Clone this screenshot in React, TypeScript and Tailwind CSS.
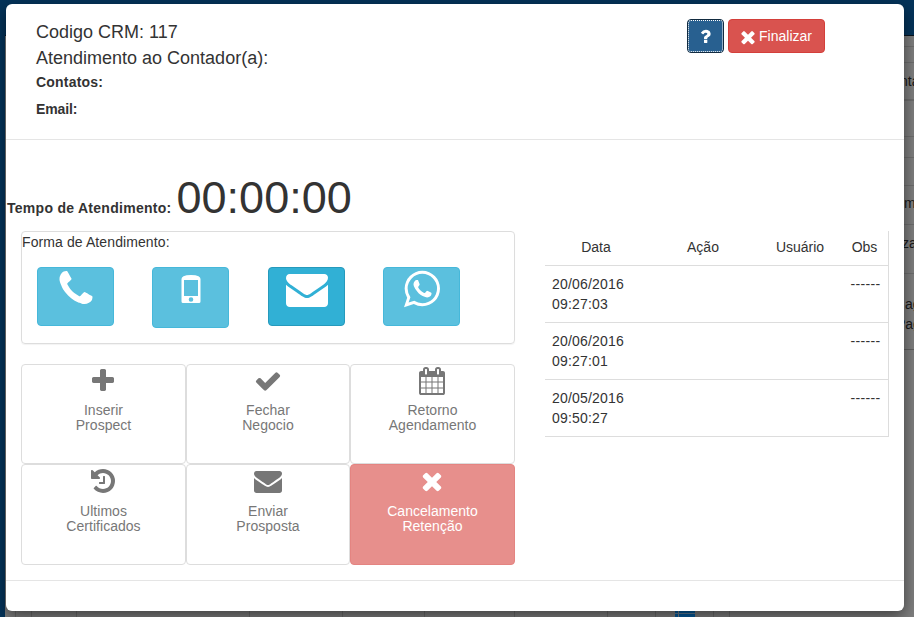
import React from "react";

const paths = {
  plus: "M1600 736v192q0 40-28 68t-68 28h-416v416q0 40-28 68t-68 28h-192q-40 0-68-28t-28-68v-416h-416q-40 0-68-28t-28-68v-192q0-40 28-68t68-28h416v-416q0-40 28-68t68-28h192q40 0 68 28t28 68v416h416q40 0 68 28t28 68z",
  check:
    "M1671 566q0 40-28 68l-724 724-136 136q-28 28-68 28t-68-28l-136-136-362-362q-28-28-28-68t28-68l136-136q28-28 68-28t68 28l294 295 656-657q28-28 68-28t68 28l136 136q28 28 28 68z",
  times:
    "M1490 1322q0 40-28 68l-136 136q-28 28-68 28t-68-28l-294-294-294 294q-28 28-68 28t-68-28l-136-136q-28-28-28-68t28-68l294-294-294-294q-28-28-28-68t28-68l136-136q28-28 68-28t68 28l294 294 294-294q28-28 68-28t68 28l136 136q28 28 28 68t-28 68l-294 294 294 294q28 28 28 68z",
  envelope:
    "M1792 710v794q0 66-47 113t-113 47h-1472q-66 0-113-47t-47-113v-794q44 49 101 87 362 246 497 345 57 42 92.500 65.500t94.500 48 110 24.500h2q51 0 110-24.500t94.500-48 92.500-65.500q170-123 498-345 57-39 100-87zm0-294q0 79-49 151t-122 123q-376 261-468 325-10 7-42.500 31t-54 38.500-52 32.500-57.500 27-50 9h-2q-23 0-50-9t-57.500-27-52-32.500-54-38.500-42.500-31q-91-64-262-182.500t-205-142.500q-62-42-117-115.500t-55-136.500q0-78 41.500-130t118.500-52h1472q65 0 112.500 47t47.500 113z",
  phone:
    "M1600 1240q0 27-10 70.500t-21 68.500q-21 50-122 106-94 51-186 51-27 0-53-3.500t-57.500-12.500-47-14.500-55.500-20.500-49-18q-98-35-175-83-127-79-264-216t-216-264q-48-77-83-175-3-9-18-49t-20.500-55.500-14.500-47-12.500-57.500-3.500-53q0-92 51-186 56-101 106-122 25-11 68.500-21t70.500-10q14 0 21 3 18 6 53 76 11 19 30 54t35 63.500 31 53.500q3 4 17.500 25t21.500 35.500 7 28.500q0 20-28.500 50t-62 55-62 53-28.500 46q0 9 5 22.500t8.500 20.500 14 24 11.500 19q76 137 174 235t235 174q2 1 19 11.500t24 14 20.500 8.500 22.500 5q18 0 46-28.500t53-62 55-62 50-28.500q14 0 28.500 7t35.500 21.500 25 17.500q25 15 53.500 31t63.500 35 54 30q70 35 76 53 3 7 3 21z",
  history:
    "M1664 896q0 156-61 298t-164 245-245 164-298 61q-172 0-327-72.500t-264-204.500q-7-10-6.500-22.500t8.500-20.500l137-138q10-9 25-9 16 2 23 12 73 95 179 147t225 52q104 0 198.500-40.500t163.500-109.500 109.500-163.500 40.500-198.500-40.500-198.500-109.500-163.500-163.500-109.500-198.500-40.500q-98 0-188 35.500t-160 101.500l137 138q31 30 14 69-17 40-59 40h-448q-26 0-45-19t-19-45v-448q0-42 40-59 39-17 69 14l130 129q107-101 244.500-156.500t284.500-55.500q156 0 298 61t245 164 164 245 61 298zm-640-288v448q0 14-9 23t-23 9h-320q-14 0-23-9t-9-23v-64q0-14 9-23t23-9h224v-352q0-14 9-23t23-9h64q14 0 23 9t9 23z",
  calendar:
    "M192 1664h288v-288h-288v288zm352 0h320v-288h-320v288zm-352-352h288v-320h-288v320zm352 0h320v-320h-320v320zm-352-384h288v-288h-288v288zm736 736h320v-288h-320v288zm-384-736h320v-288h-320v288zm768 736h288v-288h-288v288zm-384-352h320v-320h-320v320zm-352-864v-288q0-13-9.500-22.500t-22.500-9.500h-64q-13 0-22.500 9.500t-9.500 22.500v288q0 13 9.500 22.500t22.500 9.500h64q13 0 22.500-9.500t9.500-22.500zm736 864h288v-320h-288v320zm-384-384h320v-288h-320v288zm384 0h288v-288h-288v288zm32-480v-288q0-13-9.500-22.500t-22.500-9.500h-64q-13 0-22.500 9.500t-9.500 22.500v288q0 13 9.500 22.500t22.500 9.500h64q13 0 22.500-9.500t9.500-22.500zm384-64v1280q0 52-38 90t-90 38h-1408q-52 0-90-38t-38-90v-1280q0-52 38-90t90-38h128v-96q0-66 47-113t113-47h64q66 0 113 47t47 113v96h384v-96q0-66 47-113t113-47h64q66 0 113 47t47 113v96h128q52 0 90 38t38 90z",
  whatsapp:
    "M1113 974q13 0 97.500 44t89.500 53q2 5 2 15 0 33-17 76-16 39-71 65.500t-102 26.500q-57 0-190-62-98-45-170-118t-148-185q-72-107-71-194v-8q3-91 74-158 24-22 52-22 6 0 18 1.500t19 1.500q19 0 26.500 6.500t15.500 27.500q8 20 33 88t25 75q0 21-34.500 57.500t-34.500 46.500q0 7 5 15 34 73 102 137 56 53 151 101 12 7 22 7 15 0 54-48.500t52-48.500zm-203 530q127 0 243.500-50t200.500-134 134-200.500 50-243.500-50-243.500-134-200.500-200.500-134-243.500-50-243.500 50-200.500 134-134 200.500-50 243.500q0 203 120 368l-79 233 242-77q158 104 345 104zm0-1382q153 0 292.500 60t240.500 161 161 240.500 60 292.500-60 292.500-161 240.500-240.500 161-292.500 60q-195 0-365-94l-417 134 136-405q-108-178-108-389 0-153 60-292.500t161-240.500 240.500-161 292.500-60z",
  question:
    "M1088 1256v240q0 16-12 28t-28 12h-240q-16 0-28-12t-12-28v-240q0-16 12-28t28-12h240q16 0 28 12t12 28zm316-600q0 54-15.500 101t-35 76.500-55 59.500-57.500 43.500-61 35.500q-41 23-68.500 65t-27.500 67q0 17-12 32.500t-28 15.500h-240q-15 0-25.500-18.500t-10.500-37.500v-45q0-83 65-156.500t143-108.500q59-27 84-56t25-76q0-42-46.500-74t-107.500-32q-65 0-108 29-35 25-107 115-13 16-31 16-12 0-25-8l-164-125q-13-10-15.500-25t5.500-28q160-266 464-266 80 0 161 31t146 83 106 127.500 41 158.500z",
};

type IconName = keyof typeof paths;

function Icon({ name, className }: { name: IconName; className: string }) {
  return (
    <svg viewBox="0 0 1792 1792" fill="currentColor" className={`shrink-0 overflow-visible ${className}`}>
      <path d={paths[name]} />
    </svg>
  );
}

function MobileIcon() {
  return (
    <svg viewBox="0 0 20 28" className="mt-[7px] ml-px h-7 w-5 shrink-0" fill="currentColor">
      <path
        fillRule="evenodd"
        d="M0.500 4Q0.500 2.200 2.500 1.200Q5 0 10 0Q15 0 17.500 1.200Q19.500 2.200 19.500 4V26.500Q19.500 28 18 28H2Q0.500 28 0.500 26.500ZM3 5V21H17V5ZM10 22.200A2.300 2.300 0 1 0 10 26.800A2.300 2.300 0 1 0 10 22.200Z"
      />
    </svg>
  );
}

function ContactButton({ active, tall, children }: { active?: boolean; tall?: boolean; children: React.ReactNode }) {
  const color = active ? "border-[#269abc] bg-[#31b0d5]" : "border-[#46b8da] bg-[#5bc0de]";
  return (
    <button
      className={`flex w-[77px] items-start justify-center rounded-[4px] border text-white ${tall ? "h-[61px]" : "h-[59px]"} ${color}`}
    >
      {children}
    </button>
  );
}

interface ActionProps {
  icon: IconName;
  lines: [string, string];
  danger?: boolean;
  wide?: boolean;
  low?: boolean;
}

function Action({ icon, lines, danger, wide, low }: ActionProps) {
  return (
    <button
      className={`flex flex-col items-center rounded-[4px] border pt-0.5 leading-[15px] ${
        danger ? "border-[#e48481] bg-[#e78f8c] text-white" : "border-[#ddd] bg-white text-[#777]"
      }`}
    >
      <Icon name={icon} className={wide ? "mr-px size-7" : "size-7"} />
      <span className={`block tracking-[0.03px] ${low ? "mt-[9px]" : "mt-2"}`}>
        {lines[0]}
        <br />
        {lines[1]}
      </span>
    </button>
  );
}

const rows = [
  ["20/06/2016", "09:27:03"],
  ["20/06/2016", "09:27:01"],
  ["20/05/2016", "09:50:27"],
];

function Backdrop() {
  return (
    <div className="absolute inset-0 -z-10 overflow-hidden bg-[#7e7e7e] text-[14px] text-[#191919]">
      <div className="absolute inset-x-0 top-0 h-9 border-b border-[#08131d] bg-[#04335a]" />
      <div className="absolute top-0 bottom-0 left-0 w-[5px] bg-[#04335a]" />
      <div className="absolute top-[46px] right-0 h-px w-3 bg-[#6d6d6d]" />
      <div className="absolute top-[62px] right-0 h-px w-3 bg-[#6d6d6d]" />
      <div className="absolute top-[99px] right-0 h-0.5 w-3 bg-[#6d6d6d]" />
      <div className="absolute top-[136px] right-0 h-px w-3 bg-[#6d6d6d]" />
      <div className="absolute top-[157px] right-0 h-px w-3 bg-[#6d6d6d]" />
      <div className="absolute top-[185px] right-0 h-px w-3 bg-[#6d6d6d]" />
      <div className="absolute top-[224px] right-0 h-px w-3 bg-[#6d6d6d]" />
      <div className="absolute top-[273px] right-0 h-px w-3 bg-[#6d6d6d]" />
      <div className="absolute top-[349px] right-0 h-px w-3 bg-[#606060]" />
      <span className="absolute top-[71px] left-[900px]">nta</span>
      <span className="absolute top-[193px] left-[904px]">m</span>
      <span className="absolute top-[233px] left-[902px]">za</span>
      <span className="absolute top-[294px] left-[905px]">ag</span>
      <span className="absolute top-[314px] left-[896px]">Pag</span>
      <div className="absolute top-[600px] left-[15px] h-5 w-[17px] border-x border-[#6a6a6a]" />
      <div className="absolute top-[600px] left-[76px] h-5 w-[174px] border-x border-[#6a6a6a]" />
      <div className="absolute top-[600px] left-[342px] h-5 w-[83px] border-x border-[#6a6a6a]" />
      <div className="absolute top-[600px] left-[514px] h-5 w-[94px] border-x border-[#6a6a6a]" />
      <div className="absolute top-[600px] left-[655px] h-5 w-[59px] border-x border-[#6a6a6a]" />
      <div className="absolute top-[600px] left-[729px] h-5 w-px bg-[#6a6a6a]" />
      <div className="absolute top-[600px] left-[675px] flex h-5 w-5 gap-px">
        <div className="w-[3px] bg-[#045a9b]" />
        <div className="flex-1 bg-[#045a9b]" />
      </div>
      <div className="absolute top-[613px] left-[675px] h-px w-5 bg-[#5f7f99]" />
    </div>
  );
}

export default function App() {
  return (
    <div className="relative isolate h-[617px] w-[914px] overflow-hidden pt-1 pl-1.5 font-['Liberation_Sans',Arial,sans-serif] text-[14px] leading-5 text-[#333]">
      <Backdrop />
      <div className="flex h-[607px] w-[898px] flex-col rounded-[6px] bg-white shadow-[0_5px_15px_rgba(0,0,0,0.5)]">
        <header className="flex h-[136px] shrink-0 border-b border-[#e5e5e5] pt-[15px] pl-[30px]">
          <div className="w-[651px]">
            <h4 className="text-[18px] leading-[26px]">Codigo CRM: 117</h4>
            <h4 className="text-[18px] leading-[26px]">Atendimento ao Contador(a):</h4>
            <div className="mt-px font-bold tracking-[0.2px]">Contatos:</div>
            <div className="mt-[7px] font-bold tracking-[-0.1px]">Email:</div>
          </div>
          <div className="flex gap-1">
            <button className="flex h-[34px] w-[37px] items-center justify-center rounded-[4px] border border-[#122b40] bg-[#286090] text-white outline-1 -outline-offset-2 outline-dotted outline-white">
              <Icon name="question" className="size-[18.67px]" />
            </button>
            <button className="flex h-[34px] w-[97px] items-center justify-center rounded-[4px] border border-[#d43f3a] bg-[#d9534f] text-white">
              <Icon name="times" className="mt-px mr-px -ml-[3px] size-5" />
              Finalizar
            </button>
          </div>
        </header>

        <main className="h-[440px] shrink-0">
          <div className="flex h-[91px] items-baseline pt-[33px] pl-px">
            <strong className="tracking-[0.28px]">Tempo de Atendimento:</strong>
            <span className="ml-[5px] text-[45px] leading-[50px]">00:00:00</span>
          </div>
          <div className="flex items-start pl-[15px]">
            <div className="w-[494px]">
              <section className="h-[113px] rounded-[4px] border border-[#ddd] shadow-[0_1px_1px_rgba(0,0,0,0.05)]">
                <div className="tracking-[0.1px]">Forma de Atendimento:</div>
                <div className="mt-[15px] grid grid-cols-[115px_116px_115px_77px] items-start pl-[15px]">
                  <ContactButton>
                    <Icon name="phone" className="size-[42px]" />
                  </ContactButton>
                  <ContactButton tall>
                    <MobileIcon />
                  </ContactButton>
                  <ContactButton active>
                    <Icon name="envelope" className="size-[42px]" />
                  </ContactButton>
                  <ContactButton>
                    <Icon name="whatsapp" className="ml-px size-[42px]" />
                  </ContactButton>
                </div>
              </section>
              <section className="mt-5 grid grid-cols-[165px_164px_165px] grid-rows-[100px_101px]">
                <Action icon="plus" lines={["Inserir", "Prospect"]} wide />
                <Action icon="check" lines={["Fechar", "Negocio"]} />
                <Action icon="calendar" lines={["Retorno", "Agendamento"]} wide />
                <Action icon="history" lines={["Ultimos", "Certificados"]} wide low />
                <Action icon="envelope" lines={["Enviar", "Prosposta"]} low />
                <Action icon="times" lines={["Cancelamento", "Retenção"]} danger wide low />
              </section>
            </div>
            <table className="ml-[30px] w-[344px] table-fixed border-separate border-spacing-0 border-r border-[#ddd]">
              <colgroup>
                <col className="w-[102px]" />
                <col className="w-[112px]" />
                <col className="w-[82px]" />
                <col />
              </colgroup>
              <thead>
                <tr className="h-[35px]">
                  {["Data", "Ação", "Usuário", "Obs"].map((label) => (
                    <th key={label} className="border-b border-[#ddd] p-0 pb-0.5 text-center font-normal">
                      {label}
                    </th>
                  ))}
                </tr>
              </thead>
              <tbody>
                {rows.map(([day, time]) => (
                  <tr key={time} className="h-[57px]">
                    <td className="border-b border-[#ddd] px-[7px] py-2 align-top tracking-[0.2px]">
                      {day}
                      <br />
                      {time}
                    </td>
                    <td className="border-b border-[#ddd]" />
                    <td className="border-b border-[#ddd]" />
                    <td className="border-b border-[#ddd] py-2 pr-[7.500px] text-right align-top tracking-[0.34px]">
                      ------
                    </td>
                  </tr>
                ))}
              </tbody>
            </table>
          </div>
        </main>
        <footer className="flex-1 border-t border-[#e5e5e5]" />
      </div>
    </div>
  );
}
